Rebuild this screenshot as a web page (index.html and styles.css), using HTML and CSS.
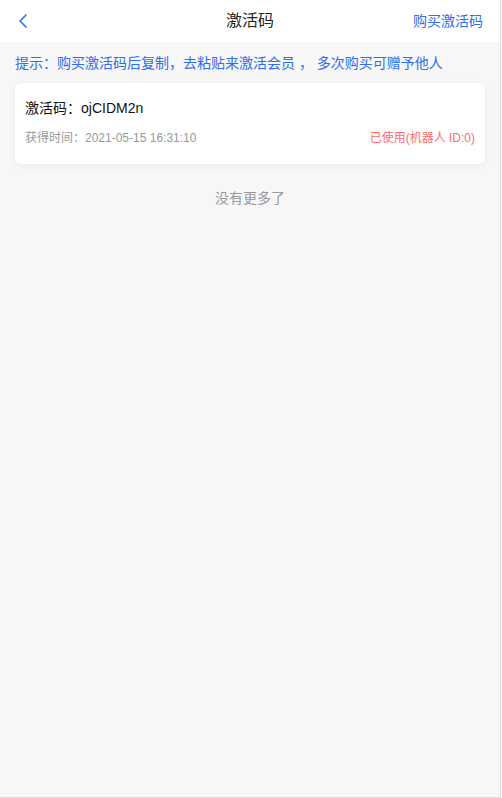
FILE: index.html
```html
<!DOCTYPE html>
<html lang="zh">
<head>
<meta charset="utf-8">
<title>激活码</title>
<link rel="stylesheet" href="styles.css">
</head>
<body>
<div class="page">
  <header class="nav">
    <span class="back">
      <svg width="12" height="16" viewBox="0 0 12 16"><path d="M8 2 L2 8 L8 14" fill="none" stroke="#2b6ef0" stroke-width="1.6" stroke-linecap="round" stroke-linejoin="round"/></svg>
    </span>
    <h1 class="title">激活码</h1>
    <a class="buy">购买激活码</a>
  </header>
  <p class="hint">提示：购买激活码后复制，去粘贴来激活会员 ， 多次购买可赠予他人</p>
  <div class="card">
    <div class="code">激活码：ojCIDM2n</div>
    <div class="meta">
      <span class="time">获得时间：2021-05-15 16:31:10</span>
      <span class="used">已使用(机器人 ID:0)</span>
    </div>
  </div>
  <div class="nomore">没有更多了</div>
</div>
</body>
</html>
```
FILE: styles.css
```css
* { box-sizing: border-box; }
html, body { margin: 0; padding: 0; }
body {
  font-family: "Liberation Sans", Arial, "Noto Sans CJK SC", sans-serif;
  background: #fff;
}
.page {
  width: 501px;
  height: 798px;
  background: #f7f7f7;
  border-right: 1px solid #dcdcdc;
  border-bottom: 1px solid #dcdcdc;
}
.nav {
  height: 42px;
  background: #fff;
  display: flex;
  align-items: center;
  justify-content: space-between;
  padding: 0 17px 0 18px;
  position: relative;
}
.back { display: flex; align-items: center; width: 12px; height: 16px; }
.title {
  position: absolute;
  left: 0; right: 0;
  margin: 0;
  text-align: center;
  font-size: 16px;
  font-weight: normal;
  color: #222;
  line-height: 40px;
  pointer-events: none;
}
.buy { font-size: 14px; color: #2b6ef0; line-height: 40px; }
.hint {
  margin: 0;
  height: 41px;
  line-height: 42px;
  padding: 0 15px;
  font-size: 14px;
  color: #2b6ef0;
  white-space: nowrap;
}
.card {
  margin: 0 15px;
  background: #fff;
  border-radius: 6px;
  box-shadow: 0 2px 8px rgba(0,0,0,0.05);
  padding: 15px 10px 16px;
}
.code { font-size: 14px; line-height: 20px; color: #111; }
.meta {
  margin-top: 10px;
  display: flex;
  justify-content: space-between;
  font-size: 12px;
  line-height: 20px;
}
.time { color: #999; }
.used { color: #ff6b6b; }
.nomore {
  margin-top: 24px;
  text-align: center;
  font-size: 14px;
  line-height: 20px;
  color: #999;
}
```
